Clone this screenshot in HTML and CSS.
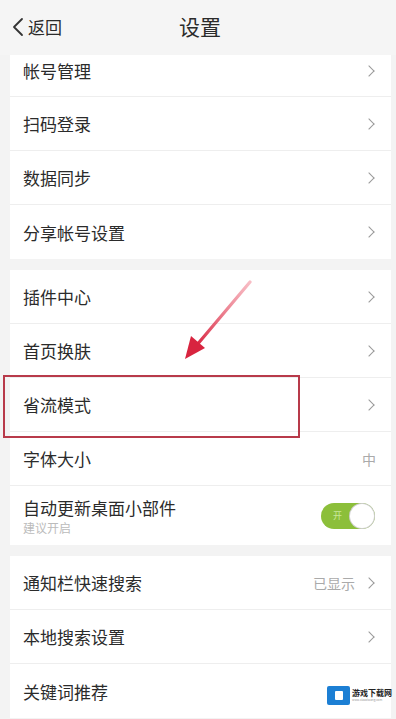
FILE: index.html
```html
<!DOCTYPE html>
<html lang="zh">
<head>
<meta charset="utf-8">
<link rel="stylesheet" href="styles.css">
</head>
<body>
<div class="page">
  <header class="header">
    <div class="back">
      <svg class="back-icon" width="12" height="20" viewBox="0 0 12 20"><polyline points="10,2 2,10 10,18" fill="none" stroke="#333" stroke-width="1.8" stroke-linecap="round" stroke-linejoin="round"/></svg>
      <span>返回</span>
    </div>
    <div class="title">设置</div>
  </header>

  <section class="card">
    <div class="row first"><span class="label">帐号管理</span><span class="chev"></span></div>
    <div class="row"><span class="label">扫码登录</span><span class="chev"></span></div>
    <div class="row"><span class="label">数据同步</span><span class="chev"></span></div>
    <div class="row"><span class="label">分享帐号设置</span><span class="chev"></span></div>
  </section>

  <section class="card">
    <div class="row"><span class="label">插件中心</span><span class="chev"></span></div>
    <div class="row"><span class="label">首页换肤</span><span class="chev"></span></div>
    <div class="row"><span class="label">省流模式</span><span class="chev"></span></div>
    <div class="row"><span class="label">字体大小</span><span class="value">中</span></div>
    <div class="row tall">
      <div class="stack">
        <span class="label">自动更新桌面小部件</span>
        <span class="sub">建议开启</span>
      </div>
      <div class="toggle"><span class="toggle-text">开</span><span class="knob"></span></div>
    </div>
  </section>

  <section class="card">
    <div class="row"><span class="label">通知栏快速搜索</span><span class="right"><span class="value">已显示</span><span class="chev"></span></span></div>
    <div class="row"><span class="label">本地搜索设置</span><span class="chev"></span></div>
    <div class="row"><span class="label">关键词推荐</span></div>
  </section>

  <div class="highlight"></div>
  <svg class="arrow" width="80" height="90" viewBox="0 0 80 90">
    <defs>
      <linearGradient id="ag" x1="1" y1="0" x2="0" y2="1">
        <stop offset="0" stop-color="#f07a8a" stop-opacity="0.5"/>
        <stop offset="1" stop-color="#d8243f"/>
      </linearGradient>
    </defs>
    <path d="M70,2 L16,66" stroke="url(#ag)" stroke-width="3.2" stroke-linecap="round" fill="none"/>
    <polygon points="5,79 11,56 25,68" fill="#d8243f"/>
  </svg>

  <div class="watermark">
    <span class="wm-icon"><span class="wm-inner"></span></span>
    <span class="wm-text"><b>游戏下载网</b><small>www.xiazaiwang.com</small></span>
  </div>
</div>
</body>
</html>
```

FILE: styles.css
```css
html, body {
  margin: 0;
  padding: 0;
}
body {
  background: #f3f3f3;
  font-family: "Noto Sans CJK SC", "Noto Sans", sans-serif;
  color: #2b2b2b;
}
.page {
  position: relative;
  width: 396px;
  height: 719px;
  overflow: hidden;
  background: #f3f3f3;
}
.header {
  position: relative;
  height: 55px;
  display: flex;
  align-items: center;
  justify-content: center;
  background: #f5f5f5;
}
.back {
  position: absolute;
  left: 12px;
  top: 14px;
  display: flex;
  align-items: center;
  gap: 4px;
  font-size: 17px;
  color: #2b2b2b;
}
.back-icon {
  display: block;
}
.title {
  font-size: 21px;
  color: #2b2b2b;
  margin-top: -4px;
  margin-left: 4px;
}
.card {
  margin: 0 5px 11px 10px;
  background: #fff;
}
.row {
  height: 54px;
  display: flex;
  align-items: center;
  justify-content: space-between;
  padding: 0 13px 0 13px;
  border-bottom: 1px solid #eeeeee;
  box-sizing: border-box;
}
.row:last-child {
  border-bottom: none;
}
.row.first {
  height: 42px;
  padding-bottom: 10px;
}
.row.tall {
  height: 59px;
}
.label {
  font-size: 17px;
  color: #2b2b2b;
}
.stack {
  display: flex;
  flex-direction: column;
}
.stack .label {
  line-height: 24px;
}
.sub {
  font-size: 12px;
  color: #bbb;
  line-height: 16px;
}
.chev {
  width: 7px;
  height: 7px;
  border-right: 1.6px solid #999;
  border-top: 1.6px solid #999;
  transform: rotate(45deg);
  margin-right: 5px;
}
.value {
  font-size: 14px;
  color: #aaa;
}
.row > .value {
  margin-right: 2px;
}
.right {
  display: flex;
  align-items: center;
  gap: 10px;
}
.toggle {
  width: 54px;
  height: 26px;
  border-radius: 13px;
  background: #8cbf3a;
  margin-right: 3px;
  display: flex;
  align-items: center;
  justify-content: space-between;
  box-sizing: border-box;
  padding: 0 1px 0 12px;
}
.toggle-text {
  font-size: 9px;
  color: #c9e79a;
}
.knob {
  width: 24px;
  height: 24px;
  border-radius: 50%;
  background: #fff;
  box-shadow: 0 0 0 1px #cfcfcf;
}
.highlight {
  position: absolute;
  left: 3px;
  top: 375px;
  width: 293px;
  height: 59px;
  border: 2px solid #b83a4a;
  pointer-events: none;
}
.arrow {
  position: absolute;
  left: 180px;
  top: 280px;
}
.watermark {
  position: absolute;
  left: 327px;
  top: 686px;
  display: flex;
  align-items: center;
  gap: 2px;
}
.wm-icon {
  width: 23px;
  height: 19px;
  background: #1c7fd4;
  border-radius: 2px;
  display: flex;
  align-items: center;
  justify-content: center;
}
.wm-inner {
  width: 8px;
  height: 9px;
  background: #fff;
  border-radius: 1px;
}
.wm-text {
  display: flex;
  flex-direction: column;
  line-height: 1;
}
.wm-text b {
  font-size: 8px;
  color: #222;
}
.wm-text small {
  font-size: 3px;
  color: #999;
  margin-top: 2px;
}
```
